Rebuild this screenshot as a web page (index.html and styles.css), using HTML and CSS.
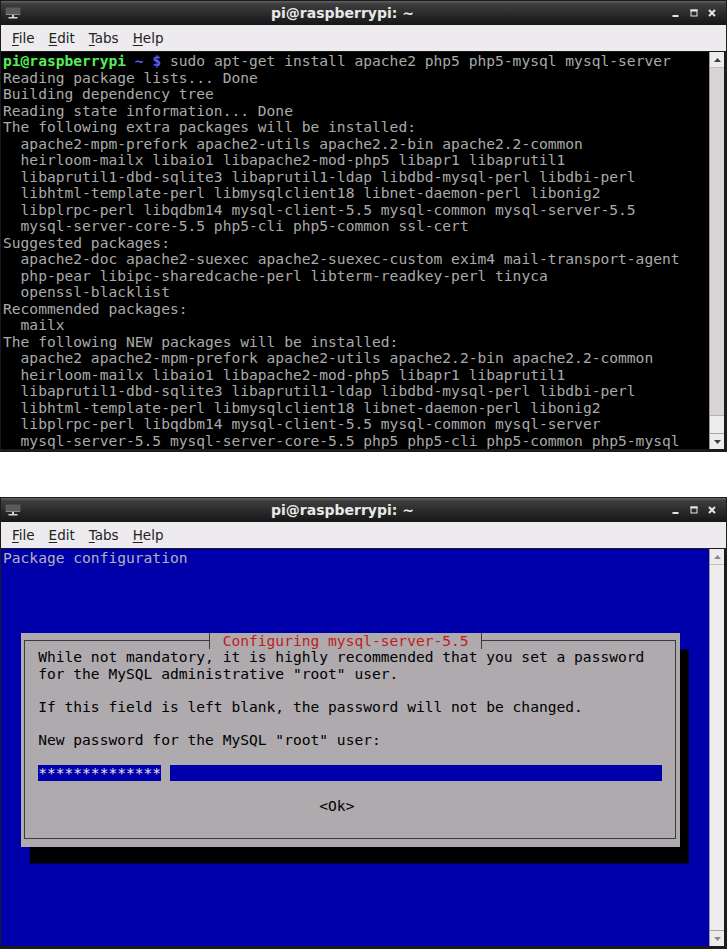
FILE: index.html
```html
<!DOCTYPE html>
<html lang="en">
<head>
    <meta charset="UTF-8">
    <meta name="viewport" content="width=device-width, initial-scale=1.0">
    <title>LAMP install on the Pi</title>
    <link rel="stylesheet" href="styles.css">
</head>
<body>
    <!-- First window: apt-get output -->
    <div class="window">
        <div class="titlebar">
            <svg class="app-icon" width="16" height="12" viewBox="0 0 16 12">
                <rect x="0.5" y="0.5" width="15" height="7.5" rx="1" fill="#5a5a5a"/>
                <rect x="1" y="7" width="14" height="1" fill="#8a8a8a"/>
                <rect x="7" y="8" width="2" height="2.5" fill="#d6d6d6"/>
                <rect x="3.5" y="10" width="9" height="1.5" fill="#d6d6d6"/>
            </svg>
            <div class="title">pi@raspberrypi: ~</div>
            <div class="controls">
                <svg width="8" height="8" viewBox="0 0 8 8"><rect x="0.5" y="6" width="6" height="2" fill="#e4e4e4"/></svg>
                <svg width="8" height="8" viewBox="0 0 8 8"><rect x="1" y="1" width="6" height="6" fill="none" stroke="#e4e4e4" stroke-width="1"/><rect x="0.5" y="0.5" width="7" height="2" fill="#e4e4e4"/></svg>
                <svg width="8" height="8" viewBox="0 0 8 8"><path d="M1 1 L7 7 M7 1 L1 7" stroke="#e4e4e4" stroke-width="2"/></svg>
            </div>
        </div>
        <div class="menubar">
            <span class="menu-item"><u>F</u>ile</span>
            <span class="menu-item"><u>E</u>dit</span>
            <span class="menu-item"><u>T</u>abs</span>
            <span class="menu-item"><u>H</u>elp</span>
        </div>
        <div class="term">
<pre class="screen">
<span class="prompt-host">pi@raspberrypi</span> <span class="prompt-dir">~ $</span> sudo apt-get install apache2 php5 php5-mysql mysql-server
Reading package lists... Done
Building dependency tree
Reading state information... Done
The following extra packages will be installed:
  apache2-mpm-prefork apache2-utils apache2.2-bin apache2.2-common
  heirloom-mailx libaio1 libapache2-mod-php5 libapr1 libaprutil1
  libaprutil1-dbd-sqlite3 libaprutil1-ldap libdbd-mysql-perl libdbi-perl
  libhtml-template-perl libmysqlclient18 libnet-daemon-perl libonig2
  libplrpc-perl libqdbm14 mysql-client-5.5 mysql-common mysql-server-5.5
  mysql-server-core-5.5 php5-cli php5-common ssl-cert
Suggested packages:
  apache2-doc apache2-suexec apache2-suexec-custom exim4 mail-transport-agent
  php-pear libipc-sharedcache-perl libterm-readkey-perl tinyca
  openssl-blacklist
Recommended packages:
  mailx
The following NEW packages will be installed:
  apache2 apache2-mpm-prefork apache2-utils apache2.2-bin apache2.2-common
  heirloom-mailx libaio1 libapache2-mod-php5 libapr1 libaprutil1
  libaprutil1-dbd-sqlite3 libaprutil1-ldap libdbd-mysql-perl libdbi-perl
  libhtml-template-perl libmysqlclient18 libnet-daemon-perl libonig2
  libplrpc-perl libqdbm14 mysql-client-5.5 mysql-common mysql-server
  mysql-server-5.5 mysql-server-core-5.5 php5 php5-cli php5-common php5-mysql</pre>
            <div class="scrollbar">
                <div class="scroll-btn scroll-up">
                    <svg width="7" height="4" viewBox="0 0 7 4"><path d="M0 4 L3.5 0 L7 4 Z" fill="#3c3c3c"/></svg>
                </div>
                <div class="scroll-thumb"></div>
                <div class="scroll-trough"></div>
                <div class="scroll-btn scroll-down">
                    <svg width="7" height="4" viewBox="0 0 7 4"><path d="M0 0 L7 0 L3.5 4 Z" fill="#3c3c3c"/></svg>
                </div>
            </div>
        </div>
    </div>

    <!-- Second window: debconf password dialog -->
    <div class="window">
        <div class="titlebar">
            <svg class="app-icon" width="16" height="12" viewBox="0 0 16 12">
                <rect x="0.5" y="0.5" width="15" height="7.5" rx="1" fill="#5a5a5a"/>
                <rect x="1" y="7" width="14" height="1" fill="#8a8a8a"/>
                <rect x="7" y="8" width="2" height="2.5" fill="#d6d6d6"/>
                <rect x="3.5" y="10" width="9" height="1.5" fill="#d6d6d6"/>
            </svg>
            <div class="title">pi@raspberrypi: ~</div>
            <div class="controls">
                <svg width="8" height="8" viewBox="0 0 8 8"><rect x="0.5" y="6" width="6" height="2" fill="#e4e4e4"/></svg>
                <svg width="8" height="8" viewBox="0 0 8 8"><rect x="1" y="1" width="6" height="6" fill="none" stroke="#e4e4e4" stroke-width="1"/><rect x="0.5" y="0.5" width="7" height="2" fill="#e4e4e4"/></svg>
                <svg width="8" height="8" viewBox="0 0 8 8"><path d="M1 1 L7 7 M7 1 L1 7" stroke="#e4e4e4" stroke-width="2"/></svg>
            </div>
        </div>
        <div class="menubar">
            <span class="menu-item"><u>F</u>ile</span>
            <span class="menu-item"><u>E</u>dit</span>
            <span class="menu-item"><u>T</u>abs</span>
            <span class="menu-item"><u>H</u>elp</span>
        </div>
        <div class="term">
            <div class="screen screen-blue">
                <div class="backtitle">Package configuration</div>
                <div class="dialog">
                    <div class="dialog-frame">
                        <div class="dialog-title">Configuring mysql-server-5.5</div>
                        <p>While not mandatory, it is highly recommended that you set a password
for the MySQL administrative "root" user.</p>
                        <p>If this field is left blank, the password will not be changed.</p>
                        <p>New password for the MySQL "root" user:</p>
                        <div class="password-field">**************<span class="cursor"> </span></div>
                        <div class="buttons">&lt;Ok&gt;</div>
                    </div>
                </div>
            </div>
            <div class="scrollbar">
                <div class="scroll-btn scroll-up">
                    <svg width="7" height="4" viewBox="0 0 7 4"><path d="M0 4 L3.5 0 L7 4 Z" fill="#8a8a8a"/></svg>
                </div>
                <div class="scroll-trough"></div>
                <div class="scroll-btn scroll-down">
                    <svg width="7" height="4" viewBox="0 0 7 4"><path d="M0 0 L7 0 L3.5 4 Z" fill="#8a8a8a"/></svg>
                </div>
            </div>
        </div>
    </div>
</body>
</html>
```

FILE: styles.css
```css
* {
    margin: 0;
    padding: 0;
    box-sizing: border-box;
}

body {
    font-family: 'DejaVu Sans', sans-serif;
    background: #ffffff;
    width: 727px;
}

/* Window frame */
.window {
    border: 1px solid #1b1b1b;
    background: #1b1b1b;
}

.window + .window {
    margin-top: 45px;
}

.titlebar {
    height: 24px;
    display: flex;
    align-items: center;
    background: linear-gradient(#626262 0%, #3e3e3e 12%, #2c2c2c 50%, #161616 100%);
    color: #e8e8e8;
}

.app-icon {
    margin-left: 4px;
    flex-shrink: 0;
}

.title {
    flex: 1;
    text-align: center;
    font-size: 14px;
    font-weight: bold;
    padding-right: 8px;
}

.controls {
    display: flex;
    align-items: center;
    gap: 10px;
    padding-right: 10px;
}

/* Menu bar */
.menubar {
    height: 26px;
    display: flex;
    align-items: center;
    padding-left: 4px;
    background: #eeebee;
    font-size: 13.5px;
    color: #222222;
}

.menu-item {
    padding: 0 7px;
}

.menu-item u {
    text-underline-offset: 2px;
}

/* Terminal area */
.term {
    display: flex;
    border-style: solid;
    border-color: #1b1b1b;
    border-width: 1px 2px 2px 0;
}

.screen {
    flex: 1;
    height: 397px;
    padding: 1px 0 0 2px;
    font-family: 'DejaVu Sans Mono', monospace;
    font-size: 14.6px;
    line-height: 16.5px;
    color: #aaaaaa;
    background: #000000;
    white-space: pre;
    overflow: hidden;
}

.prompt-host {
    color: #55ee55;
    font-weight: bold;
}

.prompt-dir {
    color: #5c5cff;
    font-weight: bold;
}

/* Scrollbar */
.scrollbar {
    width: 15px;
    display: flex;
    flex-direction: column;
    border-left: 1px solid #9a9696;
    background: #eeebee;
}

.scroll-btn {
    height: 16px;
    display: flex;
    align-items: center;
    justify-content: center;
    background: #eeebee;
}

.scroll-up {
    border-bottom: 1px solid #c2bebe;
}

.scroll-down {
    border-top: 1px solid #a8a4a4;
}

.scroll-thumb {
    height: 348px;
    background: #d9d5d5;
    border-bottom: 1px solid #b4b0b0;
}

.scroll-trough {
    flex: 1;
    background: #efecef;
}

/* debconf dialog */
.screen-blue {
    --row: 16.5px;
    background: #0000aa;
    white-space: normal;
}

.backtitle {
    height: var(--row);
    color: #b4b4b4;
}

.dialog {
    width: 75ch;
    height: calc(13 * var(--row));
    margin: calc(4 * var(--row)) 0 0 2ch;
    padding: calc(var(--row) / 2 - 0.5px) calc(0.5ch - 0.5px);
    background: #aeaaae;
    color: #000000;
    box-shadow: 1ch var(--row) 0 #000000;
}

.dialog-frame {
    position: relative;
    height: 100%;
    border: 1px solid #3c3c3c;
    padding: calc(var(--row) / 2 - 0.5px) 0 0 calc(1.5ch - 0.5px);
}

.dialog-title {
    position: absolute;
    top: calc(-1 * var(--row) / 2 - 0.5px);
    left: calc(21ch - 0.5px);
    height: var(--row);
    padding: 0 calc(1.5ch - 1px);
    border-left: 1px solid #3c3c3c;
    border-right: 1px solid #3c3c3c;
    background: #aeaaae;
    color: #c41a1a;
}

.dialog-frame p {
    white-space: pre;
    margin-bottom: var(--row);
}

.password-field {
    width: 71ch;
    height: var(--row);
    margin-bottom: var(--row);
    background: #0000aa;
    color: #e6e6f0;
    white-space: pre;
}

.cursor {
    background: #aeaaae;
}

.buttons {
    padding-left: 32ch;
    white-space: pre;
}
```
